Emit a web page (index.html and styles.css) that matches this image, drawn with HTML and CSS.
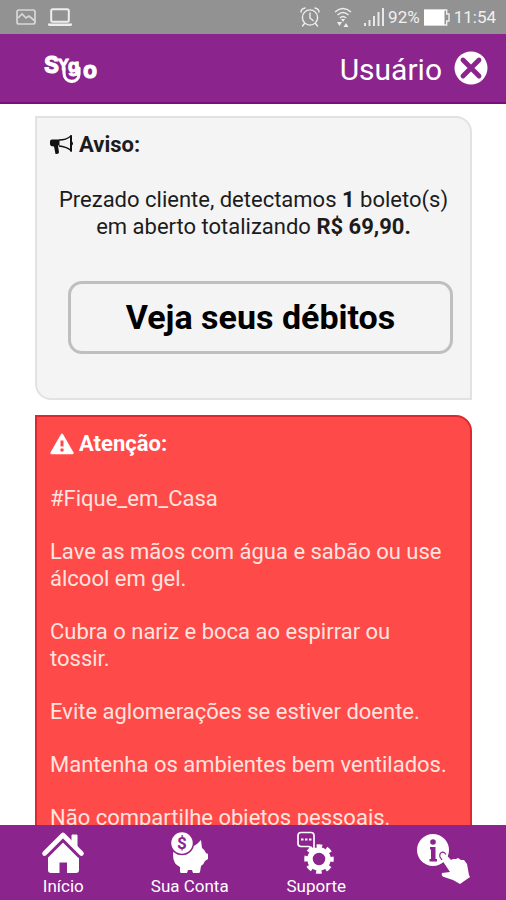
FILE: index.html
```html
<!DOCTYPE html>
<html lang="pt-BR">
<head>
<meta charset="utf-8">
<meta name="viewport" content="width=device-width, initial-scale=1">
<title>Sygo</title>
<link rel="stylesheet" href="styles.css">
</head>
<body>
<div class="status">
  <div class="status-group status-left">
    <svg width="20" height="16" viewBox="0 0 20 16" fill="none" stroke="#d8d8d8" stroke-width="1.7"><rect x="1" y="1" width="18" height="14" rx="2"/><path d="M2 9l4-4 4 4 3-2 6 5"/></svg>
    <svg width="24" height="19" viewBox="0 0 24 19"><rect x="3.200" y="1.200" width="17.600" height="12.600" rx="1.500" fill="none" stroke="#eee" stroke-width="2"/><path d="M0 15.500h24v1.500l-1 1H1l-1-1z" fill="#eee"/></svg>
  </div>
  <div class="status-group">
    <svg class="alarm" width="20" height="20" viewBox="0 0 20 20" fill="none" stroke="#eee" stroke-width="1.400" stroke-linecap="round"><circle cx="10" cy="10.500" r="7.600"/><path d="M10 6v5l3 2.500M1 5q0-3 4-4M19 5q0-3-4-4M4.500 16.500L2.500 19M15.500 16.500l2 2.500"/></svg>
    <svg class="wifi" width="18" height="21" viewBox="0 0 18 21" fill="none" stroke="#eee" stroke-width="1.500"><path d="M1 5q8-7 16 0M3.500 8q5.500-5 11 0M6 11q3-3 6 0"/><path d="M7 12l2 3 2-3zM3 15h5l-2.500 4zM9.500 20h5L12 16z" fill="#eee" stroke="none"/></svg>
    <svg class="signal" width="20" height="18" viewBox="0 0 20 18" fill="#e8e8e8"><path d="M0 15h2v3H0zM4.500 12h2v6h-2zM9 8h2v10H9zM13.500 4h2v14h-2zM18 0h2v18h-2z"/></svg>
    <span class="percent">92%</span>
    <svg class="battery" width="26" height="17" viewBox="0 0 26 17"><path d="M.7 1h22V5H25v7h-2.300v4H.7z" fill="none" stroke="#eee" stroke-width="1.400"/><path d="M0 1h20.500v15H0z" fill="#fff"/></svg>
    <span>11:54</span>
  </div>
</div>

<header class="header">
  <svg class="logo" width="58" height="34" viewBox="0 0 58 34" role="img" aria-label="Sygo">
    <path d="M22 17v5c0 11 15 11 15 1v-6" fill="none" stroke="#fff" stroke-width="3.200" stroke-linecap="round"/>
    <text class="logo-text"><tspan class="logo-big" x="2" y="22">S</tspan><tspan class="logo-small" x="16" y="19">Y</tspan><tspan class="logo-mid" x="26" y="21">g</tspan><tspan class="logo-big" x="41" y="27">o</tspan></text>
  </svg>
  <div class="user">
    <span class="user-name">Usuário</span>
    <button class="close" type="button" aria-label="Sair">
      <svg width="34" height="34" viewBox="0 0 34 34"><circle cx="17" cy="17" r="16.500" fill="#fff"/><path d="M9 9l16 16M25 9L9 25" stroke="#8b248d" stroke-width="4.800" stroke-linecap="round"/></svg>
    </button>
  </div>
</header>

<main class="content">
  <section class="card notice">
    <h2 class="title">
      <svg width="24" height="20" viewBox="0 0 24 20"><path d="M0 6.500Q0 4.500 2 4.500h7.500v6H8l1 7q-.500 1.500-3 1.500H5.500L4 11.500Q0 11.500 0 9z" fill="#111"/><path d="M9 5q7 0 12-4v14.500q-5-4-12-4.500" fill="none" stroke="#111" stroke-width="1.500"/><path d="M20 .5h2v16h-2zM22 6.500q2 2 0 4z" fill="#111"/></svg>
      Aviso:
    </h2>
    <p class="summary">Prezado cliente, detectamos <b>1</b> boleto(s) em aberto totalizando <b>R$ 69,90.</b></p>
    <button class="debts" type="button">Veja seus débitos</button>
  </section>
  <section class="card alert">
    <h2 class="title">
      <svg width="24" height="22" viewBox="0 0 24 22"><path d="M12 1.800L22.500 20H1.500z" fill="#fff" stroke="#fff" stroke-width="2.400" stroke-linejoin="round"/><path d="M12 7.500v6" stroke="#ff4a4a" stroke-width="3"/><circle cx="12" cy="17" r="1.800" fill="#ff4a4a"/></svg>
      Atenção:
    </h2>
    <p>#Fique_em_Casa</p>
    <p>Lave as mãos com água e sabão ou use álcool em gel.</p>
    <p>Cubra o nariz e boca ao espirrar ou tossir.</p>
    <p>Evite aglomerações se estiver doente.</p>
    <p>Mantenha os ambientes bem ventilados.</p>
    <p>Não compartilhe objetos pessoais.</p>
  </section>
</main>

<nav class="nav">
  <a href="#inicio">
    <svg width="44" height="44" viewBox="0 0 44 44"><path d="M3.500 22.500L22 4l18.500 18.500" fill="none" stroke="#fff" stroke-width="4.600" stroke-linecap="round" stroke-linejoin="round"/><path d="M31 4h5v13l-5-5z" fill="#fff" stroke="#fff" stroke-linejoin="round"/><path d="M22 10.500L38 26v13q0 3-3 3H26V31.500h-7.500V42H10q-3 0-3-3V26z" fill="#fff"/><path d="M6 26.500L22 10.500l16 16" fill="none" stroke="#8b248d" stroke-width="1.600"/></svg>
    <span>Início</span>
  </a>
  <a href="#conta">
    <svg width="44" height="44" viewBox="0 0 44 44"><path d="M5 24q0-5 4-8l15-1q3 0 5-2l4-4 1 8q3 2 4 5l2 1v5l-3 2q-1 3-4 5l-1 6q0 1-2 1h-5l-1-3h-4l-1 3h-6q-1 0-1-2v-4Q5 33 5 24z" fill="#fff"/><circle cx="14" cy="12" r="11.500" fill="#fff" stroke="#8b248d" stroke-width="1.500"/><text class="coin" x="14" y="18">$</text></svg>
    <span>Sua Conta</span>
  </a>
  <a href="#suporte">
    <svg width="44" height="44" viewBox="0 0 44 44"><path d="M7 1.500h10q3 0 3 3v14l-5-3H7q-3 0-3-3v-8q0-3 3-3z" fill="none" stroke="#fff" stroke-width="1.700"/><path d="M7 7.500h2.500v2H7zM11 7.500h2.500v2H11zM15 7.500h2.500v2H15z" fill="#fff"/><g fill="none" stroke="#fff"><circle cx="25" cy="28" r="9" stroke-width="5.500"/><circle cx="25" cy="28" r="12.500" stroke-width="4.500" stroke-dasharray="5.400 4.418" stroke-dashoffset="2.700"/></g></svg>
    <span>Suporte</span>
  </a>
  <a href="#info" aria-label="Informações">
    <svg class="info" width="54" height="54" viewBox="0 0 54 54"><circle cx="17" cy="19" r="16" fill="#fff"/><circle cx="17" cy="11" r="2.800" fill="#8b248d"/><path d="M14 16h5.500v12h1.500v2.500h-7.500V28H15v-9.500h-1z" fill="#8b248d"/><path d="M24 26q-1-4 2.500-4.500 2-.500 3.500 2l5 5.500 2-1 3 0 2-1 3 2h3l3 4 2 11 1 2-10 7-7-4-9-3q-3-1-2-4l8-1z" fill="#fff"/><path d="M26 29l-2-3q-1-4 2.500-4.800 2-.400 3.500 2.300" fill="none" stroke="#8b248d" stroke-width="1.200"/></svg>
  </a>
</nav>
</body>
</html>
```
FILE: styles.css
```css
* {
  box-sizing: border-box;
}

body {
  margin: 0;
  height: 100vh;
  display: flex;
  flex-direction: column;
  overflow: hidden;
  background: #fff;
  color: #1c1c1c;
  font-family: Roboto, "Liberation Sans", sans-serif;
  font-size: 22px;
  line-height: 27px;
}

svg {
  display: block;
  flex: none;
}

h2,
p {
  margin: 0;
}

button {
  font: inherit;
  cursor: pointer;
}

.status {
  flex: none;
  height: 34px;
  padding: 0 10px 0 16px;
  display: flex;
  align-items: center;
  justify-content: space-between;
  background: #929292;
  color: #f0f0f0;
  font-size: 17px;
}

.status-group {
  display: flex;
  align-items: center;
  gap: 4px;
}

.status-left {
  gap: 12px;
}

.alarm {
  margin-right: 10px;
}

.wifi {
  margin-right: 8px;
}

.header {
  flex: none;
  height: 70px;
  padding: 0 18px 0 42px;
  display: flex;
  align-items: center;
  justify-content: space-between;
  background: #8b248d;
  border-bottom: 2px solid #741078;
  color: #fff;
}

.logo {
  overflow: visible;
}

.logo-text {
  fill: #fff;
  stroke: #fff;
  stroke-width: 1px;
  font-family: Inter, sans-serif;
  font-weight: 700;
}

.logo-big {
  font-size: 23px;
}

.logo-mid {
  font-size: 18px;
}

.logo-small {
  font-size: 15px;
}

.user {
  display: flex;
  align-items: center;
  gap: 12px;
}

.user-name {
  margin-top: 3px;
  font-size: 30px;
}

.close {
  padding: 0;
  border: 0;
  background: none;
}

.content {
  flex: 1;
  min-height: 0;
  overflow: hidden;
  padding: 12px 34px 0 35px;
}

.card {
  padding: 13px;
  border-radius: 0 16px 0 16px;
  display: flex;
  flex-direction: column;
}

.title {
  display: flex;
  align-items: center;
  gap: 5px;
  font-size: 22px;
  font-weight: 700;
}

.notice {
  padding-bottom: 44px;
  margin-bottom: 15px;
  background: #f4f4f4;
  border: 2px solid #e2e2e2;
}

.summary {
  margin-top: 28px;
  text-align: center;
}

.debts {
  margin: 41px 4px 0 18px;
  height: 73px;
  border: 3px solid #bfbfbf;
  border-radius: 14px;
  background: transparent;
  color: #000;
  font-size: 34px;
  font-weight: 700;
}

.alert {
  gap: 26px;
  padding-right: 18px;
  padding-bottom: 27px;
  background: #ff4a4a;
  border: 2px solid #d92b2f;
  color: #ffe3df;
}

.alert .title {
  margin-bottom: 2px;
  color: #fff;
}

.nav {
  flex: none;
  height: 75px;
  padding-top: 6px;
  display: grid;
  grid-template-columns: repeat(4, 1fr);
  background: #8b248d;
}

.nav a {
  display: flex;
  flex-direction: column;
  align-items: center;
  gap: 1px;
  color: #fff;
  font-size: 17px;
  line-height: 20px;
  text-decoration: none;
}

.coin {
  fill: #8b248d;
  font-size: 17px;
  font-weight: 700;
  text-anchor: middle;
}
```
